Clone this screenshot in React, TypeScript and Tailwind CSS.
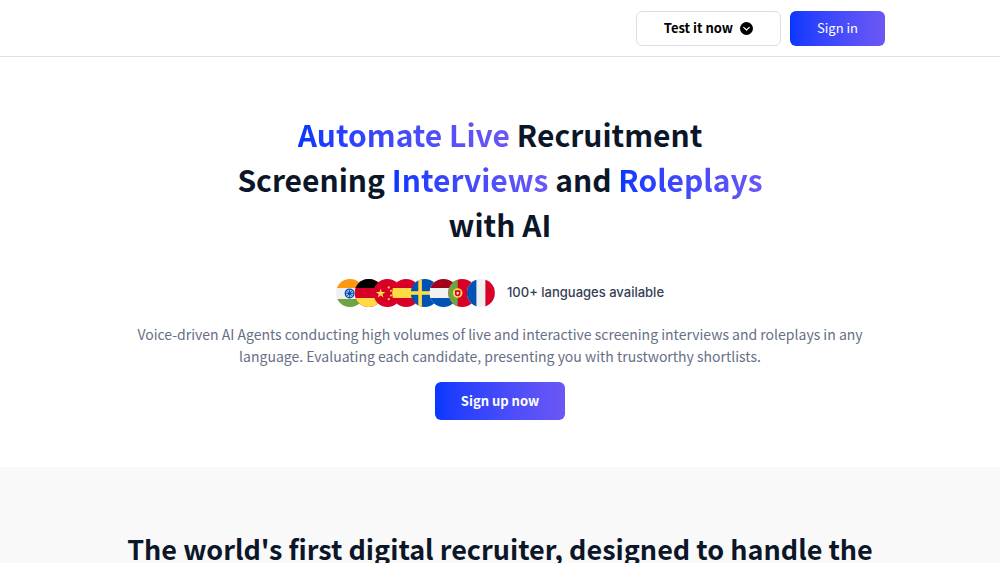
import type { ReactNode } from 'react';

const flags: { id: string; art: ReactNode }[] = [
    {
        id: 'india',
        art: (
            <>
                <rect width="28" height="28" fill="#f0f0f0" />
                <rect width="28" height="9" fill="#ff9811" />
                <rect y="20" width="28" height="8" fill="#6da544" />
                <circle cx="13.6" cy="14.4" r="5" fill="#0052b4" />
                <circle cx="13.6" cy="14.4" r="3.6" fill="#a9c3e4" />
                <path d="M13.6 10.9v7M10.1 14.4h7M11.1 11.9l5 5M16.1 11.9l-5 5" stroke="#0052b4" strokeWidth="0.9" />
                <circle cx="13.6" cy="14.4" r="1.8" fill="#0052b4" />
            </>
        ),
    },
    {
        id: 'germany',
        art: (
            <>
                <rect width="28" height="28" fill="#d80027" />
                <rect width="28" height="9" fill="#000000" />
                <rect y="19" width="28" height="9" fill="#ffda44" />
            </>
        ),
    },
    {
        id: 'china',
        art: (
            <>
                <rect width="28" height="28" fill="#d80027" />
                <path
                    d="M7.2 9.6l1.15 3.4h3.6l-2.9 2.15 1.1 3.45-2.95-2.15-2.95 2.15 1.1-3.45-2.9-2.15h3.6z"
                    fill="#ffda44"
                />
                <circle cx="15.4" cy="20.2" r="1.1" fill="#ffda44" />
                <circle cx="17.6" cy="16.6" r="1" fill="#ffda44" />
                <circle cx="17.6" cy="11.8" r="1" fill="#ffda44" />
                <circle cx="15.4" cy="8.4" r="1.1" fill="#ffda44" />
            </>
        ),
    },
    {
        id: 'spain',
        art: (
            <>
                <rect width="28" height="28" fill="#d80027" />
                <rect y="9" width="28" height="10" fill="#ffda44" />
            </>
        ),
    },
    {
        id: 'sweden',
        art: (
            <>
                <rect width="28" height="28" fill="#0052b4" />
                <rect x="7.5" width="3.6" height="28" fill="#ffda44" />
                <rect y="12.2" width="28" height="3.6" fill="#ffda44" />
            </>
        ),
    },
    {
        id: 'netherlands',
        art: (
            <>
                <rect width="28" height="28" fill="#f0f0f0" />
                <rect width="28" height="9" fill="#a2001d" />
                <rect y="19" width="28" height="9" fill="#0052b4" />
            </>
        ),
    },
    {
        id: 'portugal',
        art: (
            <>
                <rect width="28" height="28" fill="#d80027" />
                <rect width="9.5" height="28" fill="#6da544" />
                <circle cx="9.5" cy="14" r="4.8" fill="#ffda44" />
                <path d="M6.8 11.2h5.4v3.4a2.7 2.7 0 0 1-5.4 0z" fill="#d80027" />
                <path d="M8.4 12.9h2.2v1.7a1.1 1.1 0 0 1-2.2 0z" fill="#f0f0f0" />
            </>
        ),
    },
    {
        id: 'france',
        art: (
            <>
                <rect width="28" height="28" fill="#f0f0f0" />
                <rect width="9.5" height="28" fill="#0052b4" />
                <rect x="18.5" width="9.5" height="28" fill="#d80027" />
            </>
        ),
    },
];

function FlagStack() {
    return (
        <svg width="159" height="28" viewBox="0 0 159 28" aria-hidden="true">
            <defs>
                <clipPath id="flag-circle">
                    <circle cx="14" cy="14" r="14" />
                </clipPath>
            </defs>
            {flags.map((flag, i) => (
                <g key={flag.id} transform={`translate(${i * 18.7} 0)`}>
                    <g clipPath="url(#flag-circle)">{flag.art}</g>
                </g>
            ))}
        </svg>
    );
}

function Highlight({ children }: { children: ReactNode }) {
    return (
        <span className="bg-linear-to-r from-[#0537ff] to-[#6b57f5] bg-clip-text text-transparent">
            {children}
        </span>
    );
}

export default function App() {
    return (
        <div className="min-h-screen bg-white font-['Noto_Sans_CJK_JP',sans-serif] text-[#0c1629]">
            <header className="border-b border-[#e2e2e5]">
                <div className="mx-auto flex h-14 max-w-[770px] items-center justify-end gap-[9px]">
                    <button className="flex h-[35px] items-center gap-[7px] rounded-md border border-[#dcdfea] px-[27px] text-[13px] font-semibold text-black">
                        Test it now
                        <svg width="13" height="13" viewBox="0 0 12 12" aria-hidden="true">
                            <circle cx="6" cy="6" r="6" fill="#000" />
                            <path d="M3.4 5l2.6 2.4L8.6 5" fill="none" stroke="#fff" strokeWidth="1.1" strokeLinecap="round" strokeLinejoin="round" />
                        </svg>
                    </button>
                    <button className="h-[35px] rounded-md bg-linear-to-r from-[#0537ff] to-[#6b57f5] px-[27px] text-[13px] text-white">
                        Sign in
                    </button>
                </div>
            </header>

            {/* Hero */}
            <section className="mx-auto flex max-w-[770px] flex-col items-center px-4 pt-[55px] pb-[47px] text-center">
                <h1 className="max-w-[560px] text-[30px] leading-[45px] font-semibold">
                    <Highlight>Automate Live</Highlight> Recruitment
                    <br />
                    Screening <Highlight>Interviews</Highlight> and <Highlight>Roleplays</Highlight>
                    <br />
                    with AI
                </h1>
                <div className="mt-8 flex items-center gap-3">
                    <FlagStack />
                    <span className="font-[Inter,sans-serif] text-[13px] font-medium text-[#344054]">
                        100+ languages available
                    </span>
                </div>
                <p className="mt-4 text-sm leading-[22px] text-[#667085]">
                    Voice-driven AI Agents conducting high volumes of live and interactive screening interviews and roleplays in any
                    <br />
                    language. Evaluating each candidate, presenting you with trustworthy shortlists.
                </p>
                <button className="mt-[15px] h-[38px] rounded-md bg-linear-to-r from-[#0537ff] to-[#6b57f5] px-[26px] text-[13px] font-semibold text-white">
                    Sign up now
                </button>
            </section>

            <section className="bg-[#f9f9f9] px-4 pt-16 pb-16 text-center">
                <h2 className="text-[27px] leading-9 font-semibold">
                    The world's first digital recruiter, designed to handle the
                </h2>
            </section>
        </div>
    );
}
